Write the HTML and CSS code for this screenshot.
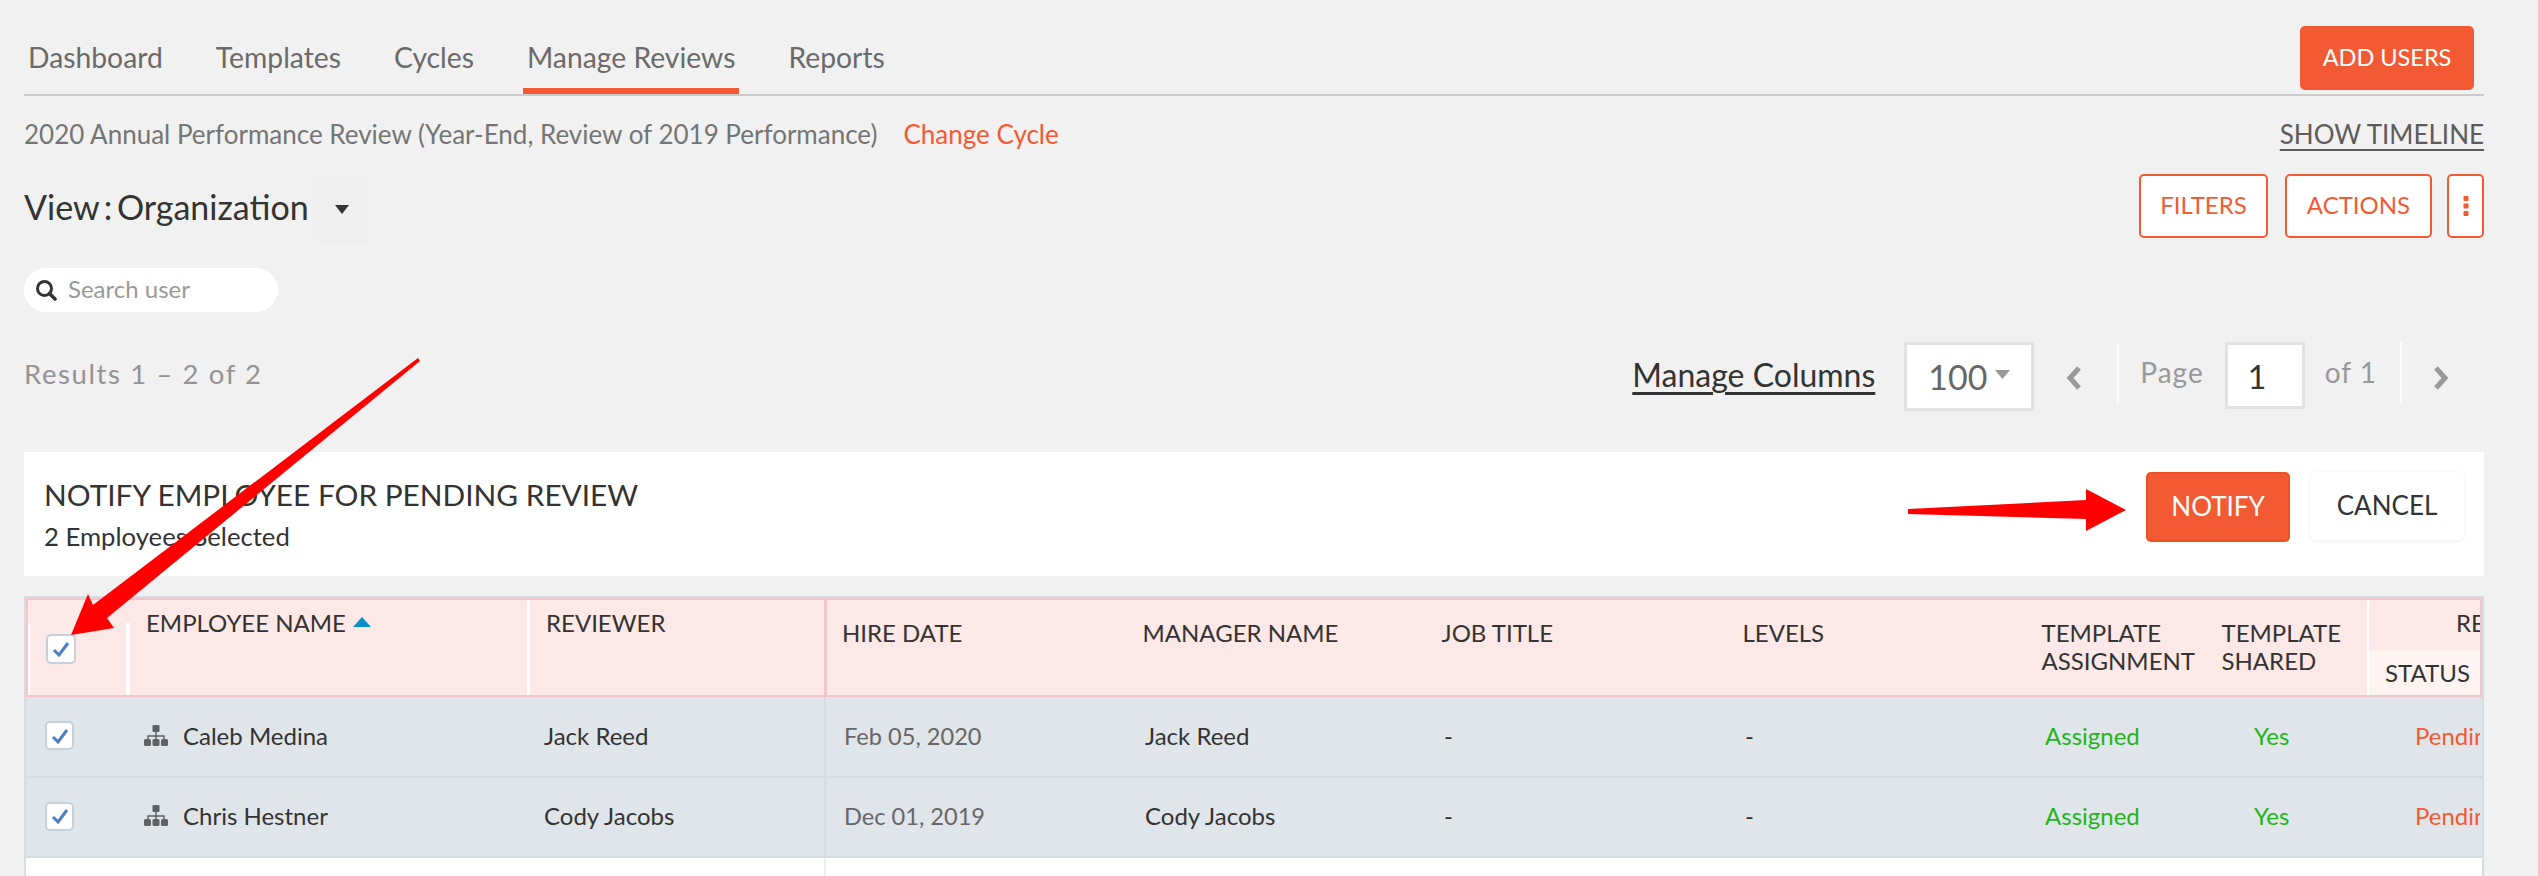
FILE: index.html
```html
<!DOCTYPE html>
<html lang="en">
<head>
<meta charset="utf-8">
<title>Manage Reviews</title>
<link rel="stylesheet" href="styles.css">
</head>
<body>
<div class="page">
  <nav class="nav">
    <div class="tabs">
      <a class="tab">Dashboard</a>
      <a class="tab">Templates</a>
      <a class="tab">Cycles</a>
      <a class="tab active">Manage Reviews</a>
      <a class="tab">Reports</a>
    </div>
    <button class="btn-solid add">ADD USERS</button>
  </nav>

  <div class="meta">
    <div class="meta-left"><span class="cycle">2020 Annual Performance Review (Year-End, Review of 2019 Performance)</span><a class="change">Change Cycle</a></div>
    <a class="timeline">SHOW TIMELINE</a>
  </div>

  <div class="viewrow">
    <div class="view"><span class="view-label">View : Organization</span><span class="view-drop"><svg width="14" height="10" viewBox="0 0 14 10"><path d="M0 1h14L7 10z" fill="#333"/></svg></span></div>
    <div class="actions">
      <button class="btn-line filters">FILTERS</button>
      <button class="btn-line act">ACTIONS</button>
      <button class="btn-line more"><svg width="6" height="20" viewBox="0 0 6 20"><rect x="0.5" y="0" width="5" height="5" rx="1" fill="#f25a33"/><rect x="0.5" y="7.5" width="5" height="5" rx="1" fill="#f25a33"/><rect x="0.5" y="15" width="5" height="5" rx="1" fill="#f25a33"/></svg></button>
    </div>
  </div>

  <div class="search">
    <svg width="22" height="22" viewBox="0 0 22 22"><circle cx="9.5" cy="9.5" r="7" fill="none" stroke="#333" stroke-width="3"/><path d="M14.5 14.5L20 20" stroke="#333" stroke-width="3.6" stroke-linecap="round"/></svg>
    <span class="search-text">Search user</span>
  </div>

  <div class="resultsrow">
    <span class="results">Results 1 – 2 of 2</span>
    <div class="pager">
      <a class="columns">Manage Columns</a>
      <div class="size"><span>100</span><svg width="15" height="9" viewBox="0 0 15 9"><path d="M0 0h15L7.5 9z" fill="#999"/></svg></div>
      <svg class="chev prev" width="16" height="24" viewBox="0 0 16 24"><path d="M13 2L4 12l9 10" fill="none" stroke="#999" stroke-width="5"/></svg>
      <span class="pdiv first"></span>
      <span class="plabel">Page</span>
      <div class="pageinput">1</div>
      <span class="plabel of">of 1</span>
      <span class="pdiv second"></span>
      <svg class="chev next" width="16" height="24" viewBox="0 0 16 24"><path d="M3 2l9 10-9 10" fill="none" stroke="#999" stroke-width="5"/></svg>
    </div>
  </div>

  <section class="band">
    <div>
      <h2 class="band-title">NOTIFY EMPLOYEE FOR PENDING REVIEW</h2>
      <p class="band-sub">2 Employees Selected</p>
    </div>
    <div class="band-btns">
      <button class="btn-solid notify">NOTIFY</button>
      <button class="cancel">CANCEL</button>
    </div>
  </section>

  <div class="table">
    <div class="thead cols">
      <div class="th th-check"><span class="cb"><svg width="18" height="16" viewBox="0 0 18 16"><path d="M2 9l5 5L16 2" fill="none" stroke="#4f7fc0" stroke-width="3"/></svg></span></div>
      <div class="th th-name">EMPLOYEE NAME <svg class="sort" width="18" height="10" viewBox="0 0 18 10"><path d="M9 0l9 10H0z" fill="#0b8fc9"/></svg></div>
      <div class="th th-rev">REVIEWER</div>
      <div class="th low">HIRE DATE</div>
      <div class="th low mgr">MANAGER NAME</div>
      <div class="th low mgr">JOB TITLE</div>
      <div class="th low mgr">LEVELS</div>
      <div class="th low mgr">TEMPLATE ASSIGNMENT</div>
      <div class="th low mgr shared">TEMPLATE SHARED</div>
      <div class="th-group"><div class="group-top">REVIEW</div><div class="group-sub">STATUS</div></div>
    </div>

    <div class="row cols">
      <div class="td td-check"><span class="cb"><svg width="18" height="16" viewBox="0 0 18 16"><path d="M2 9l5 5L16 2" fill="none" stroke="#4f7fc0" stroke-width="3"/></svg></span></div>
      <div class="td td-name"><svg width="24" height="21" viewBox="0 0 24 21"><rect x="8.5" y="0" width="7" height="7" rx="1" fill="#5f6265"/><path d="M12 7v4M4 15v-4h16v4M12 11v4" fill="none" stroke="#5f6265" stroke-width="1.5"/><rect x="0" y="14" width="7" height="7" rx="1.5" fill="#5f6265"/><rect x="8.5" y="14" width="7" height="7" rx="1.5" fill="#5f6265"/><rect x="17" y="14" width="7" height="7" rx="1.5" fill="#5f6265"/></svg>Caleb Medina</div>
      <div class="td td-rev">Jack Reed</div>
      <div class="td td-hire">Feb 05, 2020</div>
      <div class="td td-std">Jack Reed</div>
      <div class="td td-std">-</div>
      <div class="td td-std">-</div>
      <div class="td td-assign">Assigned</div>
      <div class="td td-shared">Yes</div>
      <div class="td td-status">Pending</div>
    </div>

    <div class="row cols">
      <div class="td td-check"><span class="cb"><svg width="18" height="16" viewBox="0 0 18 16"><path d="M2 9l5 5L16 2" fill="none" stroke="#4f7fc0" stroke-width="3"/></svg></span></div>
      <div class="td td-name"><svg width="24" height="21" viewBox="0 0 24 21"><rect x="8.5" y="0" width="7" height="7" rx="1" fill="#5f6265"/><path d="M12 7v4M4 15v-4h16v4M12 11v4" fill="none" stroke="#5f6265" stroke-width="1.5"/><rect x="0" y="14" width="7" height="7" rx="1.5" fill="#5f6265"/><rect x="8.5" y="14" width="7" height="7" rx="1.5" fill="#5f6265"/><rect x="17" y="14" width="7" height="7" rx="1.5" fill="#5f6265"/></svg>Chris Hestner</div>
      <div class="td td-rev">Cody Jacobs</div>
      <div class="td td-hire">Dec 01, 2019</div>
      <div class="td td-std">Cody Jacobs</div>
      <div class="td td-std">-</div>
      <div class="td td-std">-</div>
      <div class="td td-assign">Assigned</div>
      <div class="td td-shared">Yes</div>
      <div class="td td-status">Pending</div>
    </div>

    <div class="blank cols"><span></span><span></span><span></span><span class="blank-hire"></span></div>
  </div>
</div>

<svg class="arrows" width="2538" height="876" viewBox="0 0 2538 876">
  <path d="M418 358L420 361 107 618 114 628 71 635 88 594 93 605Z" fill="#ff0000"/>
  <path d="M1908 509L2086 500 2086 489 2126 510 2086 531 2086 519 1908 514Z" fill="#ff0000"/>
</svg>
</body>
</html>
```
FILE: styles.css
```css
* { box-sizing: border-box; }
html, body { margin: 0; height: 876px; overflow: hidden; }
body { background: #f1f1f1; font-family: "Lato", "Open Sans", sans-serif; color: #333; position: relative; }
button { font-family: inherit; cursor: pointer; }
h2, p { margin: 0; font-weight: 400; }

.page { padding: 0 54px 0 24px; }

/* nav */
.nav { height: 96px; border-bottom: 2px solid #cbcbcb; display: flex; justify-content: space-between; padding: 26px 10px 0 0; }
.tabs { display: flex; gap: 45px; margin-top: -26px; height: 94px; }
.tab { font-size: 28.3px; color: #6a6a6a; padding: 0 4px; height: 94px; line-height: 115px; }
.tab.active { border-bottom: 6px solid #f25a33; }
.btn-solid { background: #f25a33; color: #fff; border: 0; border-radius: 5px; }
.add { width: 174px; height: 64px; font-size: 23.5px; padding-bottom: 3px; }

/* meta */
.meta { height: 78px; display: flex; justify-content: space-between; align-items: center; font-size: 26px; padding-bottom: 3px; }
.cycle { color: #757575; }
.change { color: #f25a33; margin-left: 26px; }
.timeline { color: #5c5c5c; text-decoration: underline; text-underline-offset: 5px; }

/* view row */
.viewrow { height: 70px; display: flex; justify-content: space-between; }
.view { display: flex; align-items: center; }
.view-label { font-size: 34px; word-spacing: -4px; color: #333; margin-top: -6px; }
.view-drop { width: 56px; height: 70px; margin-left: 5px; background: #efefef; border-radius: 4px; display: flex; align-items: center; justify-content: center; }
.actions { display: flex; gap: 17px; align-items: flex-start; }
.btn-line { height: 64px; background: #fff; color: #f25a33; border: 2px solid #f25a33; border-radius: 5px; font-size: 24px; padding: 0 0 3px; }
.filters { width: 129px; }
.act { width: 147px; }
.more { width: 37px; margin-left: -2px; padding: 0; display: flex; align-items: center; justify-content: center; }

/* search */
.search { width: 254px; height: 44px; margin-top: 24px; background: #fff; border-radius: 22px; display: flex; align-items: center; gap: 11px; padding-left: 11px; font-size: 24px; color: #999; }
.search-text { margin-top: -4px; }

/* results */
.resultsrow { height: 69px; margin-top: 30px; display: flex; justify-content: space-between; align-items: center; }
.results { font-size: 27.5px; color: #949494; letter-spacing: 1.6px; margin-top: -6px; }
.pager { display: flex; align-items: flex-start; }
.columns { font-size: 32px; color: #333; text-decoration: underline; text-underline-offset: 5px; margin: 13px 29px 0 0; }
.size { width: 130px; height: 69px; background: #fff; border: 3px solid #e2e2e2; display: flex; align-items: center; justify-content: center; gap: 8px; font-size: 34px; color: #666; }
.size svg { margin-top: -4px; }
.chev { margin-top: 24px; }
.prev { margin-left: 32px; }
.pdiv { width: 2px; height: 62px; background: #fbfbfb; }
.first { margin-left: 35px; }
.second { margin-left: 23px; }
.plabel { font-size: 28px; color: #999; letter-spacing: 1px; margin-top: 13px; }
.plabel:not(.of) { margin-left: 21px; }
.pageinput { width: 80px; height: 67px; margin-left: 21px; background: #fff; border: 3px solid #e2e2e2; padding-left: 20px; font-size: 32px; line-height: 64px; color: #333; }
.of { margin-left: 20px; }
.next { margin-left: 31px; margin-right: 35px; }

/* band */
.band { height: 124px; margin-top: 41px; background: #fff; display: flex; justify-content: space-between; align-items: flex-start; padding: 20px 20px 0 20px; }
.band-title { font-size: 29.8px; line-height: 46px; color: #333; white-space: nowrap; }
.band-sub { font-size: 25.7px; line-height: 36px; color: #333; }
.band-btns { display: flex; gap: 20px; }
.notify { width: 144px; height: 70px; font-size: 26px; border: 2px solid #f0501f; padding-bottom: 3px; }
.cancel { width: 154px; height: 68px; background: #fff; border: 0; border-radius: 6px; box-shadow: 0 1px 4px rgba(0,0,0,.08); font-size: 26px; color: #333; padding-bottom: 3px; }

/* table */
.table { margin-top: 20px; border: 2px solid #d3dde2; border-bottom: 0; height: 300px; overflow: hidden; }
.cols { display: grid; grid-template-columns: 102px 400px 297px 298px 299px 301px 299px 180px 163px 113px; }
.thead { height: 99px; background: #fce8e6; border: 2px solid #f2c4cc; font-size: 24px; line-height: 28px; color: #333; }
.th { padding: 9px 8px 0 16px; }
.th-check { position: relative; padding: 34px 0 0 18px; }
.th-check::before { content: ""; position: absolute; left: 0; top: 23px; bottom: 0; width: 2px; background: #fff; }
.th-check::after { content: ""; position: absolute; right: 0; top: 23px; bottom: 0; width: 4px; background: #fff; }
.th-name { padding-left: 16px; border-right: 3px solid #fff; white-space: nowrap; }
.sort { margin-left: 1px; vertical-align: 5px; }
.th-rev { border-right: 3px solid #f2c4cc; }
.low { padding-top: 19px; padding-left: 15px; }
.mgr { padding-left: 17.5px; padding-right: 0; }
.shared { padding-right: 20px; }
.th-group { border-left: 2px solid #fff; overflow: hidden; white-space: nowrap; }
.group-top { height: 50px; padding: 9px 0 0 87px; }
.group-sub { height: 45px; background: #fdf3f1; padding: 9px 0 0 16px; }
.cb { display: flex; align-items: center; justify-content: center; width: 30px; height: 30px; background: #fff; border: 2px solid #c5d0dc; border-radius: 5px; }

.row { height: 81px; padding: 0 2px; background: #e0e5e9; border-bottom: 2px solid #d3dde2; font-size: 24px; align-items: center; color: #333; }
.row + .row { height: 80px; }
.td { white-space: nowrap; overflow: hidden; padding-bottom: 2px; }
.row + .row .td:not(.td-check):not(.td-hire) { padding-bottom: 4px; }
.td-check { padding-left: 17px; }
.td-check .cb { width: 29px; height: 29px; }
.td-name { padding-left: 14px; display: flex; align-items: center; gap: 15px; }
.td-rev { padding-left: 14px; }
.td-hire { color: #666; font-size: 23.6px; height: 100%; display: flex; align-items: center; box-shadow: inset 2px 0 0 #d3dde2; margin-left: -3px; padding-left: 20px; }
.td-std { padding-left: 20px; }
.td-assign { padding-left: 21px; color: #1fb51a; }
.td-shared { padding-left: 50px; color: #1fb51a; }
.td-status { padding-left: 48px; color: #f25a33; }

.blank { height: 60px; padding: 0 2px; background: #fff; }
.blank-hire { margin-left: -3px; border-left: 2px solid #eef1f3; }

/* annotation arrows over the page */
.arrows { position: absolute; left: 0; top: 0; pointer-events: none; }
```
